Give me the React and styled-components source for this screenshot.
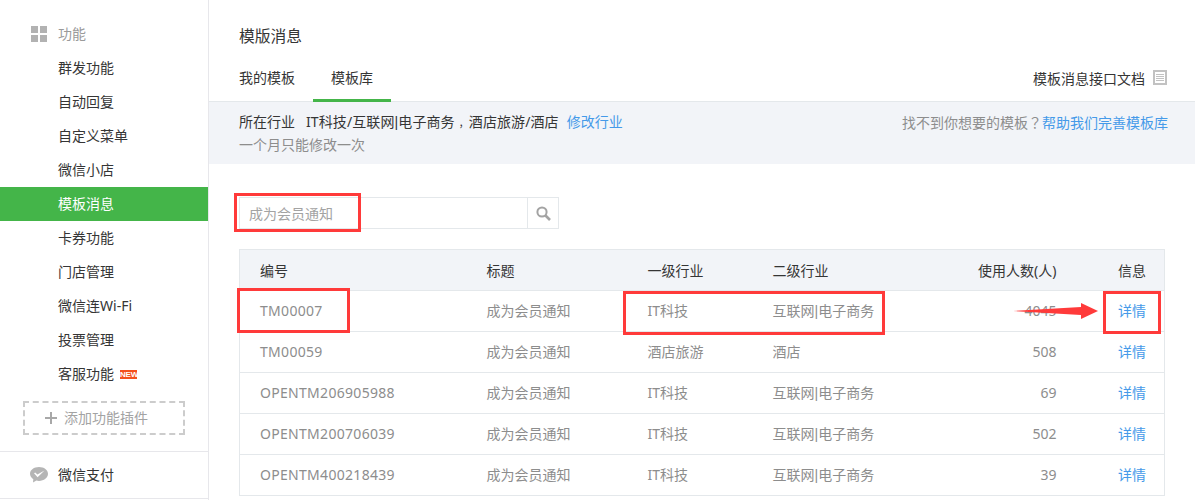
import styled, { createGlobalStyle } from "styled-components";

const GlobalStyle = createGlobalStyle`
  html, body {
    margin: 0;
    padding: 0;
    background: #fff;
    overflow: hidden;
  }
  body {
    font-family: "Noto Sans", "Noto Sans CJK SC", sans-serif;
    font-size: 14px;
    color: #353535;
  }
`;

const Page = styled.div`
  position: relative;
  display: flex;
  width: 1195px;
  height: 500px;
  overflow: hidden;
`;

const Sidebar = styled.aside`
  width: 209px;
  flex-shrink: 0;
  height: 100%;
  padding-top: 17px;
  box-sizing: border-box;
  border-right: 1px solid #e7e7eb;
`;

const MenuTitle = styled.div`
  display: flex;
  align-items: center;
  box-sizing: border-box;
  height: 34px;
  padding: 0 0 0 31px;
  gap: 11px;
  color: #9a9a9a;
  & > span:last-child {
    margin-top: -2px;
  }
`;

const GridIcon = styled.span`
  display: grid;
  grid-template-columns: 7px 7px;
  grid-auto-rows: 7px;
  gap: 2px;
  & > i {
    background: #b2b2b2;
  }
`;

const MenuItem = styled.div`
  display: flex;
  align-items: center;
  box-sizing: border-box;
  height: 34px;
  padding: 0 0 2px 58px;
  gap: 6px;
  color: ${(p) => (p.$active ? "#fff" : "#353535")};
  background: ${(p) => (p.$active ? "#44b549" : "transparent")};
`;

const NewBadge = styled.span`
  width: 17px;
  height: 9px;
  margin-top: 2px;
  background: #f4511e;
  color: #fff;
  font-size: 8px;
  font-weight: 700;
  line-height: 9px;
  text-align: center;
  letter-spacing: -0.2px;
  font-family: "Liberation Sans", sans-serif;
`;

const AddPlugin = styled.div`
  display: flex;
  align-items: center;
  gap: 7px;
  box-sizing: border-box;
  width: 162px;
  height: 34px;
  margin: 10px 0 16px 23px;
  padding-left: 20px;
  border: 2px dashed #ccc;
  color: #a3a3a3;
  & > span {
    margin-top: -2px;
  }
`;

const PayRow = styled.div`
  display: flex;
  align-items: center;
  gap: 10px;
  box-sizing: border-box;
  height: 48px;
  padding-left: 30px;
  border-top: 1px solid #e7e7eb;
  border-bottom: 1px solid #e7e7eb;
  & > span {
    margin-top: -2px;
  }
`;

const Main = styled.main`
  flex: 1;
  min-width: 0;
`;

const PageTitle = styled.h2`
  margin: 0;
  padding: 24px 0 0 30px;
  height: 54px;
  box-sizing: border-box;
  font-size: 15.75px;
  font-weight: 400;
  line-height: 24px;
`;

const TabBar = styled.div`
  display: flex;
  align-items: flex-end;
  height: 47px;
  padding: 0 28px 0 12px;
  border-bottom: 1px solid #e4e8eb;
`;

const Tab = styled.div`
  display: flex;
  align-items: center;
  height: 47px;
  box-sizing: border-box;
  padding: 0 18px;
  margin-bottom: -1px;
  border-bottom: 3px solid ${(p) => (p.$active ? "#44b549" : "transparent")};
`;

const DocLink = styled.div`
  margin-left: auto;
  display: flex;
  align-items: center;
  gap: 8px;
  height: 47px;
`;

const Notice = styled.div`
  display: flex;
  justify-content: space-between;
  box-sizing: border-box;
  height: 62px;
  padding: 9px 27px 0 30px;
  background: #f2f4f8;
  line-height: 22px;
`;

const Muted = styled.div`
  color: #8d8d8d;
`;

const Link = styled.a`
  color: #459ae9;
  text-decoration: none;
`;

const IndustryText = styled.span`
  margin: 0 8px 0 11px;
  letter-spacing: 0.1px;
`;

// the bar between 互联网 and 电子商务 is a narrow one in the reference
const Pipe = styled.span`
  font-family: "Liberation Sans", sans-serif;
`;

// the full-width comma sits mid-cell in the reference, not at the left
const Comma = styled.span`
  padding-left: 4px;
  font-size: 10px;
`;

const Question = styled.span`
  font-family: "Noto Sans CJK TC", sans-serif;
`;

const SearchBar = styled.div`
  display: flex;
  width: 320px;
  height: 32px;
  margin: 33px 0 20px 30px;
  border: 1px solid #e4e8eb;
  box-sizing: border-box;
`;

const SearchField = styled.div`
  flex: 1;
  display: flex;
  align-items: center;
  padding-left: 9px;
  color: #a3a3a3;
`;

const SearchButton = styled.div`
  width: 30px;
  display: flex;
  align-items: center;
  justify-content: center;
  border-left: 1px solid #e4e8eb;
`;

const Table = styled.table`
  width: 926px;
  margin-left: 30px;
  border-collapse: collapse;
  table-layout: fixed;
  border: 1px solid #e4e8eb;
`;

const Th = styled.th`
  height: 39px;
  padding: 0 ${(p) => (p.$pr ? p.$pr : 0)}px 1px 20px;
  background: #f2f4f8;
  font-weight: 400;
  text-align: ${(p) => (p.$right ? "right" : "left")};
  border-bottom: 1px solid #e4e8eb;
`;

const Td = styled.td`
  height: 41px;
  box-sizing: border-box;
  padding: 0 ${(p) => (p.$pr ? p.$pr : 0)}px 2px 20px;
  color: #8d8d8d;
  text-align: ${(p) => (p.$right ? "right" : "left")};
  border-bottom: 1px solid #e4e8eb;
`;

const CodeCell = styled(Td)`
  letter-spacing: 0.3px;
`;

const Highlight = styled.div`
  position: absolute;
  left: ${(p) => p.$x}px;
  top: ${(p) => p.$y}px;
  width: ${(p) => p.$w}px;
  height: ${(p) => p.$h}px;
  box-sizing: border-box;
  border: 3px solid #ff3a3a;
  pointer-events: none;
`;

const ArrowMark = styled.svg`
  position: absolute;
  left: 1013px;
  top: 302px;
`;

const menu = ["群发功能", "自动回复", "自定义菜单", "微信小店", "模板消息", "卡券功能", "门店管理", "微信连Wi-Fi", "投票管理"];

const rows = [
  ["TM00007", "IT科技", "互联网|电子商务", "4045"],
  ["TM00059", "酒店旅游", "酒店", "508"],
  ["OPENTM206905988", "IT科技", "互联网|电子商务", "69"],
  ["OPENTM200706039", "IT科技", "互联网|电子商务", "502"],
  ["OPENTM400218439", "IT科技", "互联网|电子商务", "39"],
];

const withPipe = (text) => {
  const parts = text.split("|");
  if (parts.length < 2) return text;
  return (
    <>
      {parts[0]}
      <Pipe>|</Pipe>
      {parts[1]}
    </>
  );
};

const DocIcon = () => (
  <svg width="14" height="15" viewBox="0 0 14 15">
    <rect width="14" height="15" fill="#c2c2c2" />
    <rect x="2" y="2" width="10" height="11" fill="#fff" />
    <path d="M3 4.500h8M3 6.500h8M3 8.500h8M3 10.500h8" stroke="#c2c2c2" strokeWidth="1" />
  </svg>
);

const SearchIcon = () => (
  <svg width="15" height="15" viewBox="0 0 15 15">
    <circle cx="6" cy="6" r="4.600" fill="none" stroke="#a3a3a3" strokeWidth="2" />
    <path d="M9.500 9.500L14 14" stroke="#a3a3a3" strokeWidth="2.600" />
  </svg>
);

const PlusIcon = () => (
  <svg width="12" height="12" viewBox="0 0 12 12">
    <path d="M6 0v12M0 6h12" stroke="#a8a8a8" strokeWidth="2" />
  </svg>
);

const PayIcon = () => (
  <svg width="18" height="16" viewBox="0 0 18 16">
    <path d="M9 0C4 0 0 2.900 0 6.800c0 2.200 1.300 4.100 3.300 5.400L3 15.600l3.400-2c.8.2 1.700.3 2.600.3 5 0 9-3.200 9-7.100S14 0 9 0z" fill="#b5b5b5" />
    <path d="M4 6.200L5.200 5.600L7.400 7.400L14.500 3.600L7.600 10.200Z" fill="#fff" />
  </svg>
);

export default function App() {
  return (
    <Page>
      <GlobalStyle />
      <Sidebar>
        <MenuTitle>
          <GridIcon>
            <i />
            <i />
            <i />
            <i />
          </GridIcon>
          <span>功能</span>
        </MenuTitle>
        {menu.map((m) => (
          <MenuItem key={m} $active={m === "模板消息"}>
            {m}
          </MenuItem>
        ))}
        <MenuItem>
          客服功能
          <NewBadge>NEW</NewBadge>
        </MenuItem>
        <AddPlugin>
          <PlusIcon />
          <span>添加功能插件</span>
        </AddPlugin>
        <PayRow>
          <PayIcon />
          <span>微信支付</span>
        </PayRow>
      </Sidebar>
      <Main>
        <PageTitle>模版消息</PageTitle>
        <TabBar>
          <Tab>我的模板</Tab>
          <Tab $active>模板库</Tab>
          <DocLink>
            模板消息接口文档
            <DocIcon />
          </DocLink>
        </TabBar>
        <Notice>
          <div>
            <div>
              所在行业
              <IndustryText>
                IT科技/互联网<Pipe>|</Pipe>电子商务<Comma>，</Comma>酒店旅游/酒店
              </IndustryText>
              <Link>修改行业</Link>
            </div>
            <Muted>一个月只能修改一次</Muted>
          </div>
          <Muted>
            找不到你想要的模板<Question>？</Question>
            <Link>帮助我们完善模板库</Link>
          </Muted>
        </Notice>
        <SearchBar>
          <SearchField>成为会员通知</SearchField>
          <SearchButton>
            <SearchIcon />
          </SearchButton>
        </SearchBar>
        <Table>
          <colgroup>
            <col width="227" />
            <col width="161" />
            <col width="125" />
            <col width="127" />
            <col width="197" />
            <col />
          </colgroup>
          <thead>
            <tr>
              <Th>编号</Th>
              <Th>标题</Th>
              <Th>一级行业</Th>
              <Th>二级行业</Th>
              <Th $right $pr={20}>使用人数(人)</Th>
              <Th $right $pr={18}>信息</Th>
            </tr>
          </thead>
          <tbody>
            {rows.map((r) => (
              <tr key={r[0]}>
                <CodeCell>{r[0]}</CodeCell>
                <Td>成为会员通知</Td>
                <Td>{r[1]}</Td>
                <Td>{withPipe(r[2])}</Td>
                <Td $right $pr={20}>{r[3]}</Td>
                <Td $right $pr={18}>
                  <Link>详情</Link>
                </Td>
              </tr>
            ))}
          </tbody>
        </Table>
      </Main>
      <Highlight $x={234} $y={193} $w={127} $h={39} />
      <Highlight $x={237} $y={288} $w={113} $h={45} />
      <Highlight $x={623} $y={291} $w={262} $h={44} />
      <Highlight $x={1103} $y={291} $w={58} $h={43} />
      <ArrowMark width="86" height="18" viewBox="0 0 86 18">
        <path d="M0 9L68 5V1L85 9L68 17V13Z" fill="#ff3a3a" />
      </ArrowMark>
    </Page>
  );
}
